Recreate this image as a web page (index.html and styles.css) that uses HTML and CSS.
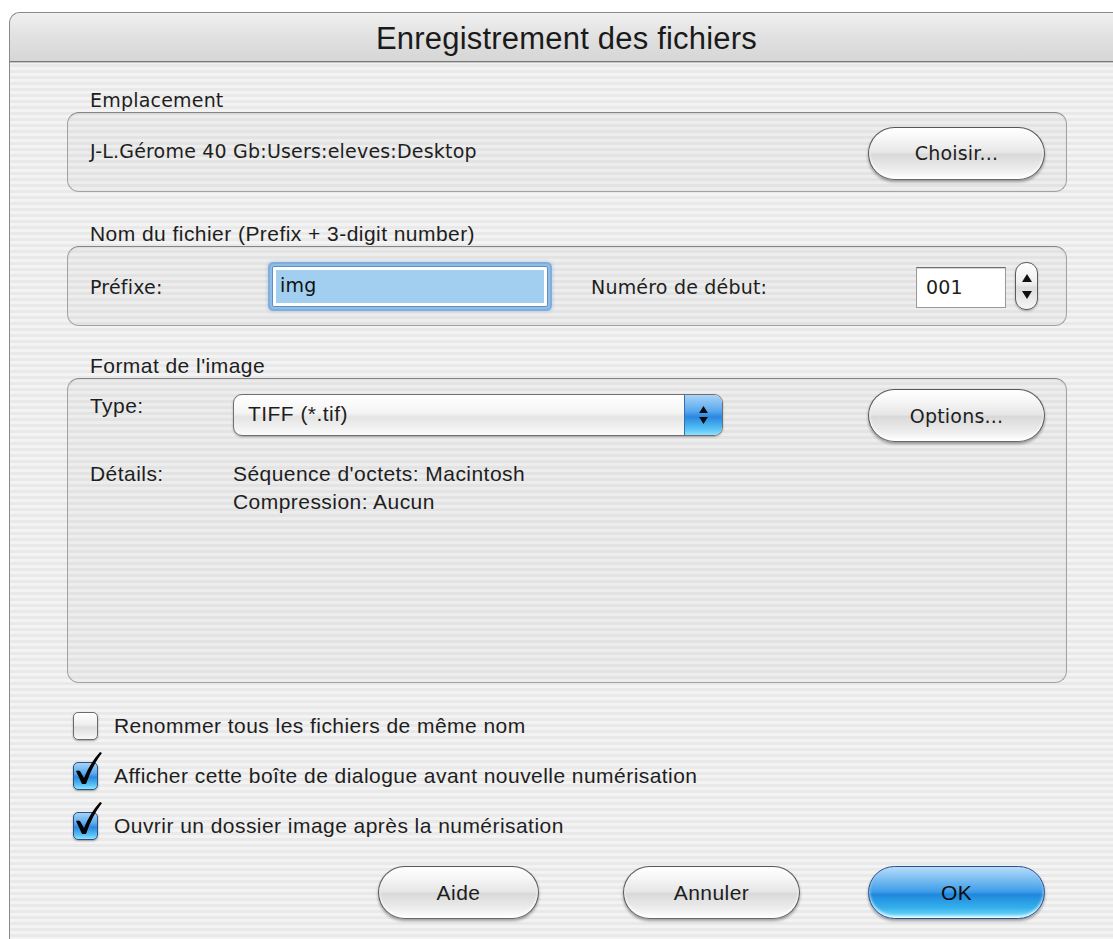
FILE: index.html
```html
<!DOCTYPE html>
<html lang="fr">
<head>
<meta charset="utf-8">
<title>Enregistrement des fichiers</title>
<link rel="stylesheet" href="styles.css">
</head>
<body>
<div class="dialog">
  <header class="titlebar">
    <h1 class="title">Enregistrement des fichiers</h1>
  </header>

  <div class="content">
    <section class="group">
      <div class="group-label">Emplacement</div>
      <div class="group-box box-location">
        <span class="path">J-L.Gérome 40 Gb:Users:eleves:Desktop</span>
        <button class="aqua-btn btn-wide">Choisir...</button>
      </div>
    </section>

    <section class="group group-spaced">
      <div class="group-label cond">Nom du fichier (Prefix + 3-digit number)</div>
      <div class="group-box box-name">
        <span class="prefix-label">Préfixe:</span>
        <div class="text-field focused"><span class="selected">img</span></div>
        <span class="num-label">Numéro de début:</span>
        <div class="num-field">001</div>
        <div class="stepper">
          <svg class="stepper-arrow" viewBox="0 0 10 8" width="10" height="8"><path d="M5 0 L10 8 L0 8 Z"/></svg>
          <svg class="stepper-arrow" viewBox="0 0 10 8" width="10" height="8"><path d="M0 0 L10 0 L5 8 Z"/></svg>
        </div>
      </div>
    </section>

    <section class="group group-spaced2">
      <div class="group-label cond">Format de l'image</div>
      <div class="group-box box-format">
        <div class="format-row">
          <span class="label-col type-label cond">Type:</span>
          <div class="popup">
            <span class="popup-value cond">TIFF (*.tif)</span>
            <span class="popup-arrows">
              <svg viewBox="0 0 10 8" width="9" height="7"><path d="M5 0 L10 8 L0 8 Z"/></svg>
              <svg viewBox="0 0 10 8" width="9" height="7"><path d="M0 0 L10 0 L5 8 Z"/></svg>
            </span>
          </div>
          <button class="aqua-btn btn-wide btn-options">Options...</button>
        </div>
        <div class="details-row cond">
          <span class="label-col">Détails:</span>
          <div class="details">
            <div>Séquence d'octets: Macintosh</div>
            <div>Compression: Aucun</div>
          </div>
        </div>
      </div>
    </section>

    <div class="checks cond">
      <label class="check"><span class="check-box"></span>Renommer tous les fichiers de même nom</label>
      <label class="check"><span class="check-box on"><svg class="tick" viewBox="0 0 30 36" width="30" height="36"><path d="M3 20 Q5 19 7 20 L11 27 Q17 12 27 1 L29 2 Q19 15 13 33 L9 33 Z"/></svg></span>Afficher cette boîte de dialogue avant nouvelle numérisation</label>
      <label class="check"><span class="check-box on"><svg class="tick" viewBox="0 0 30 36" width="30" height="36"><path d="M3 20 Q5 19 7 20 L11 27 Q17 12 27 1 L29 2 Q19 15 13 33 L9 33 Z"/></svg></span>Ouvrir un dossier image après la numérisation</label>
    </div>

    <div class="actions cond">
      <button class="aqua-btn btn-help">Aide</button>
      <button class="aqua-btn btn-wide btn-cancel">Annuler</button>
      <button class="aqua-btn btn-wide btn-default">OK</button>
    </div>
  </div>
</div>
</body>
</html>
```
FILE: styles.css
```css
* { box-sizing: border-box; }

html, body {
  margin: 0;
  height: 100%;
}

body {
  background: #ffffff;
  overflow: hidden;
  font-family: "DejaVu Sans", sans-serif;
  font-size: 19px;
  letter-spacing: 0.2px;
  color: #1e1e1e;
}

.cond {
  font-family: "Liberation Sans", Arial, sans-serif;
  font-size: 21px;
  letter-spacing: 0.45px;
}

/* Sheet window with pinstripe background */
.dialog {
  margin: 12px 0 0 9px;
  width: 1114px;
  height: 940px;
  border: 1px solid #8a8a8a;
  border-right: none;
  border-bottom: none;
  border-radius: 11px 0 0 0;
  overflow: hidden;
  background: repeating-linear-gradient(to bottom, #f3f3f3 0 3px, #e9e9e9 3px 6px);
}

.titlebar {
  height: 49px;
  display: flex;
  align-items: center;
  justify-content: center;
  background: linear-gradient(to bottom, #f0f0f0 0%, #e2e2e2 45%, #d6d6d6 100%);
  border-bottom: 1px solid #7a7a7a;
  box-shadow: 0 1px 0 #c4c4c4;
}

.title {
  margin: 0;
  font-family: "Liberation Sans", Arial, sans-serif;
  font-weight: 400;
  font-size: 31px;
  line-height: 1;
  letter-spacing: 0.2px;
  color: #1a1a1a;
  padding-top: 2px;
}

.content {
  padding: 27px 0 0 57px;
}

/* Group boxes */
.group-label {
  height: 22px;
  line-height: 22px;
  padding-left: 23px;
  margin-bottom: 1px;
  white-space: nowrap;
}

.group-spaced { margin-top: 31px; }
.group-spaced2 { margin-top: 29px; }

.group-box {
  width: 1000px;
  border: 1px solid #a3a3a3;
  border-top-color: #858585;
  border-radius: 12px;
  background: rgba(0, 0, 0, 0.022);
  box-shadow: inset 0 1px 2px rgba(0, 0, 0, 0.07);
}

.box-location {
  height: 80px;
  display: flex;
  align-items: center;
  padding: 2px 21px 0 22px;
}

.path {
  flex: 1;
  margin-top: -4px;
}

.box-name {
  height: 80px;
  display: flex;
  align-items: center;
  padding: 0 28px 0 22px;
}

.prefix-label {
  width: 182px;
  margin-top: 2px;
}

.text-field {
  width: 276px;
  height: 41px;
  padding: 3px;
  border-radius: 2px;
  background: #ffffff;
  border: 1px solid #5d8fc4;
  box-shadow: 0 0 0 2px #8fbde6, 0 0 0 4px rgba(106, 160, 214, 0.75), 0 0 3px 5px rgba(120, 170, 220, 0.35);
  display: flex;
  align-items: center;
}

.selected {
  flex: 1;
  align-self: stretch;
  display: flex;
  align-items: center;
  padding-left: 4px;
  background: #a2cfef;
  color: #111111;
  padding-bottom: 2px;
}

.num-label {
  margin-left: 43px;
  margin-top: 2px;
}

.num-field {
  margin-left: auto;
  width: 90px;
  height: 41px;
  background: #ffffff;
  border: 1px solid #9b9b9b;
  border-top-color: #6e6e6e;
  box-shadow: inset 0 1px 1px rgba(0, 0, 0, 0.18);
  padding: 0 0 0 9px;
  display: flex;
  align-items: center;
  margin-top: 2px;
}

.stepper {
  margin-left: 9px;
  width: 23px;
  height: 48px;
  border: 1px solid #5a5a5a;
  border-radius: 11px;
  background: linear-gradient(to bottom, #ffffff 0%, #ececec 48%, #dcdcdc 52%, #f6f6f6 100%);
  box-shadow: 0 1px 2px rgba(0, 0, 0, 0.3);
  display: flex;
  flex-direction: column;
  align-items: center;
  justify-content: space-around;
  padding: 6px 0;
}

.stepper-arrow path { fill: #111111; }

/* Image format box */
.box-format {
  height: 305px;
  padding: 10px 21px 0 22px;
}

.format-row {
  display: flex;
  align-items: flex-start;
}

.label-col {
  width: 143px;
  flex: none;
}

.type-label {
  margin-top: 5px;
}

.popup {
  margin-top: 5px;
  width: 490px;
  height: 42px;
  border: 1px solid #6f6f6f;
  border-radius: 9px;
  background: linear-gradient(to bottom, #ffffff 0%, #f4f4f4 45%, #e4e4e4 55%, #fbfbfb 100%);
  box-shadow: 0 1px 2px rgba(0, 0, 0, 0.3);
  display: flex;
  align-items: stretch;
  overflow: hidden;
}

.popup-value {
  flex: 1;
  display: flex;
  align-items: center;
  padding-left: 14px;
  padding-bottom: 2px;
}

.popup-arrows {
  width: 38px;
  border-left: 1px solid #3f6aa6;
  background: linear-gradient(to bottom, #a9d4f7 0%, #58a8ee 40%, #2a87e0 55%, #56c2f5 85%, #8fe0fc 100%);
  display: flex;
  flex-direction: column;
  align-items: center;
  justify-content: center;
  gap: 4px;
}

.popup-arrows path { fill: #0d0d0d; }

.btn-options {
  margin-left: auto;
}

.details-row {
  display: flex;
  align-items: flex-start;
  margin-top: 18px;
  line-height: 28px;
}

/* Checkboxes */
.checks {
  margin-top: 18px;
  padding-left: 6px;
}

.check {
  height: 50px;
  display: flex;
  align-items: center;
  gap: 16px;
}

.check-box {
  position: relative;
  width: 25px;
  height: 28px;
  flex: none;
  border: 1px solid #6b6b6b;
  border-radius: 5px;
  background: linear-gradient(to bottom, #ffffff 0%, #eeeeee 45%, #dedede 55%, #f7f7f7 100%);
  box-shadow: 0 1px 2px rgba(0, 0, 0, 0.35);
}

.check-box.on {
  border-color: #2b4f86;
  background: linear-gradient(to bottom, #a6d2f6 0%, #5aa9ee 40%, #2c88df 55%, #58c4f5 85%, #95e2fc 100%);
}

.tick {
  position: absolute;
  left: -1px;
  top: -12px;
}

.tick path { fill: #050505; }

/* Push buttons */
.actions {
  display: flex;
  align-items: center;
  margin-top: 15px;
  padding-left: 311px;
}

.aqua-btn {
  height: 53px;
  border-radius: 27px;
  border: 1.5px solid #585858;
  border-bottom-color: #6a6a6a;
  background: linear-gradient(to bottom, #ffffff 0%, #f7f7f7 20%, #e6e6e6 48%, #d9d9d9 52%, #ececec 80%, #ffffff 100%);
  box-shadow: 0 2px 3px rgba(0, 0, 0, 0.35), inset 0 -2px 3px rgba(255, 255, 255, 0.9);
  color: #1d1d1d;
  padding: 0;
  cursor: default;
}

.box-location .aqua-btn,
.format-row .aqua-btn {
  font-family: "DejaVu Sans", sans-serif;
  font-size: 19px;
  letter-spacing: 0.2px;
}

.actions .aqua-btn {
  font-family: "Liberation Sans", Arial, sans-serif;
  font-size: 21px;
  letter-spacing: 0.45px;
}

.btn-wide { width: 177px; }

.btn-help { width: 161px; }

.btn-cancel { margin-left: 84px; }

.btn-default {
  margin-left: 68px;
  border-color: #2d4f8e;
  background: linear-gradient(to bottom, #b5dcfa 0%, #7fc0f2 22%, #3f9ee8 48%, #1f88dd 54%, #35b0ec 80%, #7ee0fc 100%);
  color: #0e0e0e;
}
```
